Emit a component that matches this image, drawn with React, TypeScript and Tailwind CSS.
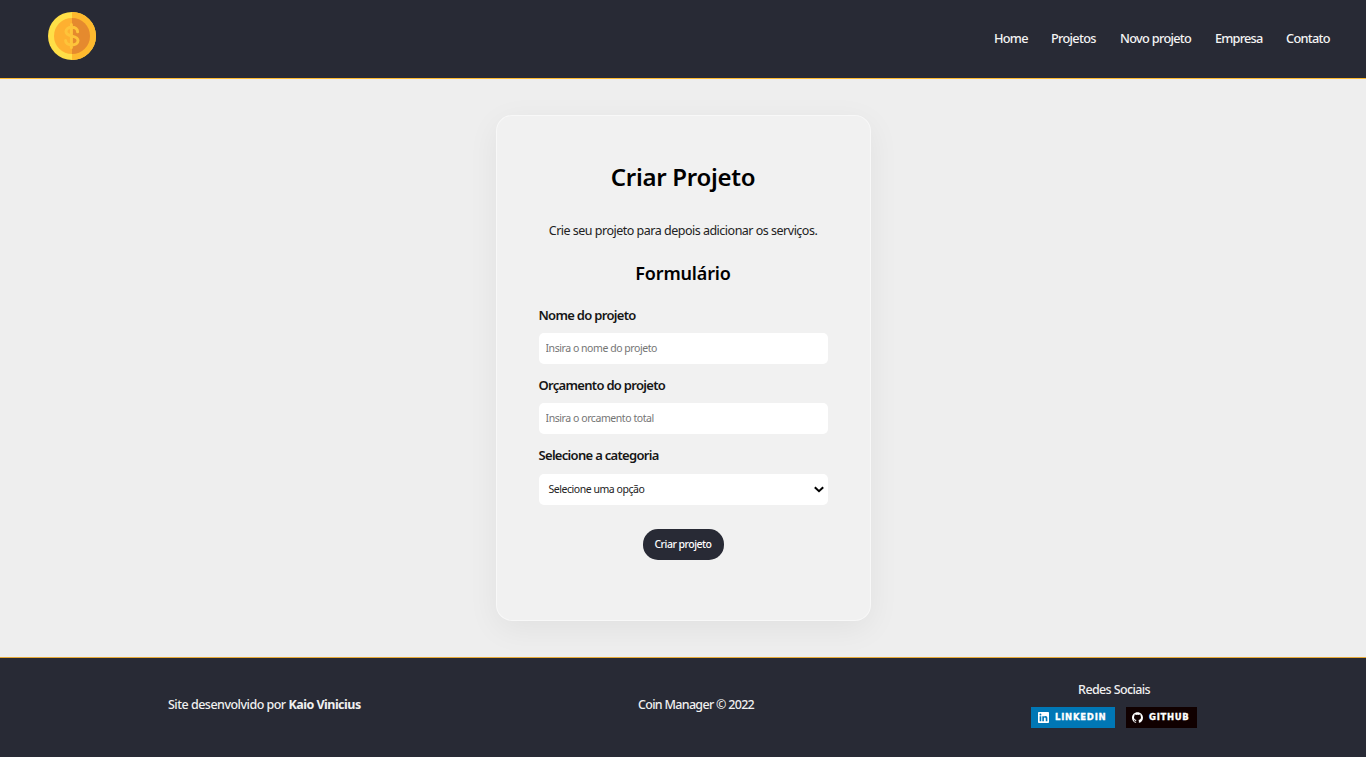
import React from "react";

const navItems = [
  { label: "Home", style: "w-[33px] tracking-[-0.75px]" },
  { label: "Projetos", style: "w-[45px] tracking-[-0.7px]" },
  { label: "Novo projeto", style: "w-[71px] tracking-[-0.7px]" },
  { label: "Empresa", style: "w-[47px] tracking-[-0.8px]" },
  { label: "Contato", style: "w-[44px] tracking-[-0.7px]" },
];

function CoinLogo() {
  return (
    <svg className="h-12 w-12" viewBox="0 0 48 48" aria-label="Coin Manager">
      <circle cx="24" cy="24" r="24" fill="#ffdf47" />
      <path d="M24 0a24 24 0 0 1 0 48z" fill="#feb92e" />
      <circle cx="24" cy="24" r="18" fill="#feb030" />
      <path d="M24 6a18 18 0 0 1 0 36z" fill="#e58a2e" />
      <path
        d="M29.6 19.8c0-2.9-2.5-4.5-5.8-4.5s-5.8 1.6-5.8 4.3c0 6.1 12 3 12 8.9 0 2.8-2.7 4.4-6.2 4.4s-6.2-1.7-6.2-4.5M23.4 12.4v23"
        fill="none"
        stroke="#fec43a"
        strokeWidth="3"
        strokeLinecap="round"
      />
    </svg>
  );
}

function LinkedinIcon() {
  return (
    <svg className="h-[11px] w-[11px] shrink-0" viewBox="0 0 24 24" fill="#fff">
      <path d="M20.447 20.452h-3.554v-5.569c0-1.328-.027-3.037-1.852-3.037-1.853 0-2.136 1.445-2.136 2.939v5.667H9.351V9h3.414v1.561h.046c.477-.9 1.637-1.85 3.37-1.85 3.601 0 4.267 2.37 4.267 5.455v6.286zM5.337 7.433a2.062 2.062 0 0 1-2.063-2.065 2.064 2.064 0 1 1 2.063 2.065zm1.782 13.019H3.555V9h3.564v11.452zM22.225 0H1.771C.792 0 0 .774 0 1.729v20.542C0 23.227.792 24 1.771 24h20.451C23.2 24 24 23.227 24 22.271V1.729C24 .774 23.2 0 22.222 0h.003z" />
    </svg>
  );
}

function GithubIcon() {
  return (
    <svg className="h-[11px] w-[11px] shrink-0" viewBox="0 0 24 24" fill="#fff">
      <path d="M12 .297c-6.63 0-12 5.373-12 12 0 5.303 3.438 9.8 8.205 11.385.6.113.82-.258.82-.577 0-.285-.01-1.04-.015-2.04-3.338.724-4.042-1.61-4.042-1.61C4.422 18.07 3.633 17.7 3.633 17.7c-1.087-.744.084-.729.084-.729 1.205.084 1.838 1.236 1.838 1.236 1.07 1.835 2.809 1.305 3.495.998.108-.776.417-1.305.76-1.605-2.665-.3-5.466-1.332-5.466-5.93 0-1.31.465-2.38 1.235-3.22-.135-.303-.54-1.523.105-3.176 0 0 1.005-.322 3.3 1.23.96-.267 1.98-.399 3-.405 1.02.006 2.04.138 3 .405 2.28-1.552 3.285-1.23 3.285-1.23.645 1.653.24 2.873.12 3.176.765.84 1.23 1.91 1.23 3.22 0 4.61-2.805 5.625-5.475 5.92.42.36.81 1.096.81 2.22 0 1.606-.015 2.896-.015 3.286 0 .315.21.69.825.57C20.565 22.092 24 17.592 24 12.297c0-6.627-5.373-12-12-12" />
    </svg>
  );
}

function Field({ label, children }: { label: string; children: React.ReactNode }) {
  return (
    <div className="flex flex-col">
      <label className="h-[18px] text-[13px] leading-[18px] font-semibold tracking-[-0.69px] whitespace-nowrap text-[#161616]">{label}</label>
      {children}
    </div>
  );
}

export default function App() {
  return (
    <div className="flex h-[757px] flex-col overflow-hidden bg-[#eeeeee] font-['Noto_Sans','Open_Sans',sans-serif] text-black">
      <header className="flex h-[79px] shrink-0 justify-between border-b border-[#ffbb33] bg-[#282a35] pt-3 pr-9 pl-12">
        <CoinLogo />
        <nav className="flex h-[54px] items-center gap-6 text-[12.75px] font-medium text-[#f4f4f4]">
          {navItems.map((item) => (
            <a key={item.label} href="#" className={`whitespace-nowrap ${item.style}`}>{item.label}</a>
          ))}
        </nav>
      </header>

      <main className="flex h-[578px] shrink-0 justify-center pt-9">
        <section className="flex h-[506px] w-[375px] flex-col items-center rounded-2xl border border-white/50 bg-[#f1f1f1] px-[42px] shadow-[0_8px_32px_0_rgba(0,0,0,0.06)]">
          <h1 className="mt-[43px] text-[24px] leading-9 font-semibold tracking-[-0.27px] whitespace-nowrap">Criar Projeto</h1>
          <p className="mt-[26px] text-[12.5px] leading-5 tracking-[-0.5px] whitespace-nowrap text-[#222]">
            Crie seu projeto para depois adicionar os serviços.
          </p>
          <h2 className="mt-[18px] text-[18px] leading-[28px] font-semibold tracking-[-0.15px] whitespace-nowrap">Formulário</h2>
          <form className="mt-[19px] flex w-full flex-col">
            <Field label="Nome do projeto">
              <input placeholder="Insira o nome do projeto" className="mt-[9px] h-[31px] rounded-[5px] bg-white px-[7px] pb-px text-[10.5px] tracking-[-0.45px] placeholder:text-[#757575]" />
            </Field>
            <div className="mt-3">
              <Field label="Orçamento do projeto">
                <input placeholder="Insira o orcamento total" className="mt-[9px] h-[31px] rounded-[5px] bg-white px-[7px] pb-px text-[10.5px] tracking-[-0.43px] placeholder:text-[#757575]" />
              </Field>
            </div>
            <div className="mt-3">
              <Field label="Selecione a categoria">
                <div className="mt-[10px] flex h-[31px] items-center justify-between rounded-[5px] bg-white pr-[4px] pl-[10px] text-[10.5px] tracking-[-0.46px] text-[#222]">
                  <span>Selecione uma opção</span>
                  <svg className="h-[7px] w-[10px]" viewBox="0 0 10 7" fill="none" stroke="#000" strokeWidth="2">
                    <path d="M.8 1.2 5 5.2 9.2 1.2" />
                  </svg>
                </div>
              </Field>
            </div>
            <button type="button" className="mt-6 h-[31px] w-[81px] self-center rounded-[15px] bg-[#282a35] text-[10.5px] font-medium tracking-[-0.5px] whitespace-nowrap text-white">
              Criar projeto
            </button>
          </form>
        </section>
      </main>

      <footer className="flex h-[100px] shrink-0 border-t border-[#e6a937] bg-[#282a35] text-[12.5px] font-medium text-[#f0f0f0]">
        <div className="mt-[37px] ml-[168px] h-5 w-[470px] leading-5 tracking-[-0.51px] whitespace-nowrap">
          Site desenvolvido por <strong className="font-bold">Kaio Vinicius</strong>
        </div>
        <div className="mt-[37px] h-5 w-[393px] leading-5 tracking-[-0.7px] whitespace-nowrap">Coin Manager © 2022</div>
        <div className="flex w-[166px] flex-col items-center pt-[22px]">
          <p className="leading-5 tracking-[-0.63px]">Redes Sociais</p>
          <div className="mt-[7px] flex gap-[11px] font-['DejaVu_Sans',sans-serif] text-[8.5px] font-bold text-white [-webkit-text-stroke:0.3px_#fff]">
            <a href="#" className="flex h-[21px] w-[84px] items-center gap-[6px] bg-[#0077b5] pl-[7px] tracking-[0.75px]">
              <LinkedinIcon />
              LINKEDIN
            </a>
            <a href="#" className="flex h-[21px] w-[71px] items-center gap-[6px] bg-[#100000] pl-[6px] tracking-[0.65px]">
              <GithubIcon />
              GITHUB
            </a>
          </div>
        </div>
      </footer>
    </div>
  );
}
